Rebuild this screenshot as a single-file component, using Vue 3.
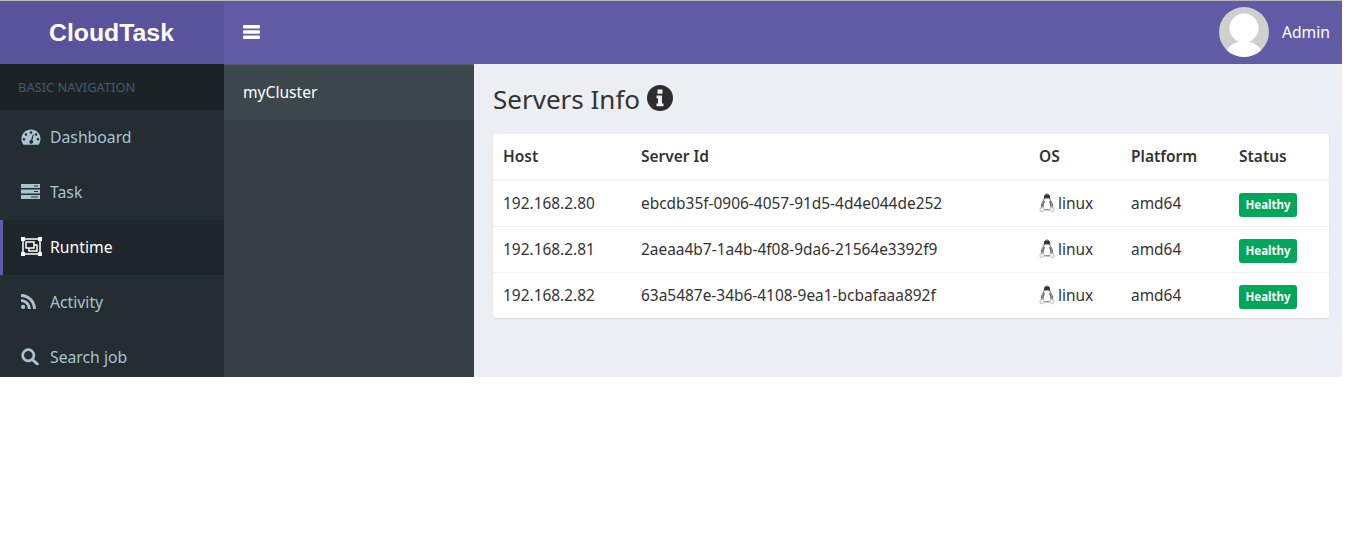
<template>
  <div class="page">
    <header class="topbar">
      <div class="brand">CloudTask</div>
      <div class="topbar-main">
        <button class="burger" aria-label="menu">
          <svg width="17" height="14" viewBox="0 0 17 14"><path d="M1 0h15a1 1 0 0 1 1 1v1.400a1 1 0 0 1-1 1H1a1 1 0 0 1-1-1V1a1 1 0 0 1 1-1zM1 5.300h15a1 1 0 0 1 1 1v1.400a1 1 0 0 1-1 1H1a1 1 0 0 1-1-1V6.300a1 1 0 0 1 1-1zM1 10.600h15a1 1 0 0 1 1 1V13a1 1 0 0 1-1 1H1a1 1 0 0 1-1-1v-1.400a1 1 0 0 1 1-1z" fill="#fff"/></svg>
        </button>
        <div class="user">
          <svg class="avatar" width="50" height="50" viewBox="0 0 50 50">
            <defs><clipPath id="av"><circle cx="25" cy="25" r="25"/></clipPath></defs>
            <circle cx="25" cy="25" r="25" fill="#cfcfcf"/>
            <g clip-path="url(#av)" fill="#fff">
              <circle cx="25" cy="21" r="14.500"/>
              <ellipse cx="25" cy="50" rx="19" ry="16"/>
            </g>
          </svg>
          <span>Admin</span>
        </div>
      </div>
    </header>
    <div class="body">
      <aside class="sidebar">
        <div class="nav-label">BASIC NAVIGATION</div>
        <a v-for="item in navItems" :key="item.label" class="nav-item" :class="{ active: item.active }">
          <span class="nav-icon">
            <svg v-if="item.icon === 'dash'" width="20" height="16" viewBox="0 0 20 16"><path fill-rule="evenodd" d="M10 0.5C4.6 0.5 0.5 4.6 0.5 10c0 2 .6 3.9 1.6 5.2l.4.5h15l.4-.5c1-1.3 1.6-3.2 1.6-5.2C19.500 4.600 15.400 .5 10 .5zM10 2.200a1.300 1.300 0 1 1 0 2.600 1.300 1.300 0 0 1 0-2.600zM5 4.200a1.300 1.300 0 1 1 0 2.600 1.300 1.300 0 0 1 0-2.600zM15 4.200a1.300 1.300 0 1 1 0 2.600 1.300 1.300 0 0 1 0-2.600zM3 9a1.300 1.300 0 1 1 0 2.600A1.300 1.300 0 0 1 3 9zM17 9a1.300 1.300 0 1 1 0 2.600A1.300 1.300 0 0 1 17 9zM11.800 5.500l.9.3-1.300 5.700c.6.5.9 1.100.8 1.800-.2 1-1.200 1.700-2.300 1.500-1-.2-1.700-1.200-1.500-2.300.1-.8.8-1.400 1.600-1.500z" fill="currentColor"/></svg>
            <svg v-else-if="item.icon === 'task'" width="19" height="15" viewBox="0 0 19 15"><path fill-rule="evenodd" d="M0 0h19v4H0zM13 1.500v1h4v-1zM0 5.500h19v4H0zM13 7v1h4V7zM0 11h19v4H0zM10 12.500v1h7v-1z" fill="currentColor"/></svg>
            <svg v-else-if="item.icon === 'runtime'" width="21" height="19" viewBox="0 0 21 19"><g fill="none" stroke="currentColor" stroke-width="1.500"><rect x="2" y="2" width="17" height="15"/><rect x="5" y="5" width="8" height="6"/><path d="M8 11v3h8V8h-3"/></g><g fill="currentColor"><rect x="0" y="0" width="4" height="4"/><rect x="17" y="0" width="4" height="4"/><rect x="0" y="15" width="4" height="4"/><rect x="17" y="15" width="4" height="4"/></g></svg>
            <svg v-else-if="item.icon === 'rss'" width="15" height="15" viewBox="0 0 15 15"><g fill="currentColor"><circle cx="2.100" cy="12.900" r="2.100"/><path d="M0 5.200v2.900c3.800 0 6.900 3.100 6.900 6.900h2.900C9.800 9.600 5.400 5.200 0 5.200z"/><path d="M0 0v2.900C6.700 2.900 12.100 8.300 12.100 15H15C15 6.700 8.300 0 0 0z"/></g></svg>
            <svg v-else width="18" height="17" viewBox="0 0 18 17"><circle cx="7.300" cy="7.300" r="5.600" fill="none" stroke="currentColor" stroke-width="2.700"/><path d="M11.300 11.500l5 4.500" stroke="currentColor" stroke-width="3" stroke-linecap="round"/></svg>
          </span>
          <span>{{ item.label }}</span>
        </a>
      </aside>
      <nav class="subpanel">
        <div class="cluster">myCluster</div>
      </nav>
      <main class="content">
        <h1 class="title">
          Servers Info
          <svg class="info" width="26" height="26" viewBox="0 0 26 26"><path fill-rule="evenodd" d="M13 0a13 13 0 1 1 0 26a13 13 0 0 1 0-26zM10.500 4.500v4.200h5V4.500zM9.500 10.500v2.800h1.500v5.200H9.500v2.800h7v-2.800H15v-8z" fill="#2d2d2d"/></svg>
        </h1>
        <div class="card">
          <table>
            <thead>
              <tr>
                <th class="c-host">Host</th>
                <th class="c-id">Server Id</th>
                <th class="c-os">OS</th>
                <th class="c-platform">Platform</th>
                <th>Status</th>
              </tr>
            </thead>
            <tbody>
              <tr v-for="s in servers" :key="s.host">
                <td>{{ s.host }}</td>
                <td>{{ s.id }}</td>
                <td>
                  <span class="os">
                    <svg width="16" height="20" viewBox="0 0 16 20">
                      <path d="M8 1C6 1 5.400 2.600 5.400 4.500c0 1.500-.5 2.300-1.400 3.700C3 9.800 2.200 11.500 2.400 13.500c.1 1.300 1 2.700 2.300 3.300h6.600c1.300-.6 2.200-2 2.300-3.300.2-2-.6-3.700-1.600-5.300-.9-1.400-1.400-2.200-1.400-3.700C10.600 2.600 10 1 8 1z" fill="#fff" stroke="#3a3a3a" stroke-width=".8"/>
                      <path d="M6 2c-.8.600-.9 2.200-.7 3.500h5.400C10.900 4.200 10.800 2.600 10 2 9 1.300 7 1.300 6 2z" fill="#333"/>
                      <path d="M4.800 8C3.600 9.800 3 11.500 3.200 13.200l1.500 1.300C4.500 12 5 10 6.200 8.200zM11.200 8c1.200 1.800 1.800 3.500 1.600 5.200l-1.500 1.300c.2-2.500-.3-4.500-1.500-6.300z" fill="#666"/>
                      <path d="M6.500 5.300h3L8 6.800z" fill="#c9c49a"/>
                      <path d="M1 15.500l3-1.500 1.500 3-2 1.800-2.500-1zM15 15.500l-3-1.500-1.500 3 2 1.800 2.500-1z" fill="#f4f4ee" stroke="#9a9a9a" stroke-width=".6"/>
                    </svg>
                    linux
                  </span>
                </td>
                <td>{{ s.platform }}</td>
                <td><span class="badge">Healthy</span></td>
              </tr>
            </tbody>
          </table>
        </div>
      </main>
    </div>
  </div>
</template>

<script setup>
const navItems = [
  { label: 'Dashboard', icon: 'dash' },
  { label: 'Task', icon: 'task' },
  { label: 'Runtime', icon: 'runtime', active: true },
  { label: 'Activity', icon: 'rss' },
  { label: 'Search job', icon: 'search' }
]

const servers = [
  { host: '192.168.2.80', id: 'ebcdb35f-0906-4057-91d5-4d4e044de252', platform: 'amd64' },
  { host: '192.168.2.81', id: '2aeaa4b7-1a4b-4f08-9da6-21564e3392f9', platform: 'amd64' },
  { host: '192.168.2.82', id: '63a5487e-34b6-4108-9ea1-bcbafaaa892f', platform: 'amd64' }
]
</script>

<style>
body {
  background: #fff;
}
</style>

<style scoped>
.page {
  width: 1342px;
  height: 377px;
  overflow: hidden;
  display: flex;
  flex-direction: column;
  font-family: "Noto Sans", sans-serif;
  font-size: 15px;
  color: #333;
}

.topbar {
  height: 64px;
  flex: none;
  display: flex;
  border-top: 1px solid #b5b5b5;
  box-sizing: border-box;
}

.brand {
  width: 224px;
  flex: none;
  box-sizing: border-box;
  padding-right: 1px;
  background: #58539a;
  color: #fff;
  font-family: "Liberation Sans", sans-serif;
  font-size: 24.800px;
  font-weight: 700;
  text-align: center;
  line-height: 63px;
}

.topbar-main {
  flex: 1;
  display: flex;
  align-items: center;
  justify-content: space-between;
  background: #615ba6;
  padding: 0 12px 1px 19px;
}

.burger {
  background: none;
  border: 0;
  padding: 0;
  display: flex;
}

.user {
  display: flex;
  align-items: center;
  gap: 13px;
  color: #fff;
  font-size: 15.700px;
}

.body {
  flex: 1;
  display: flex;
  min-height: 0;
}

.sidebar {
  width: 224px;
  flex: none;
  background: #232d32;
  color: #a9c4d3;
}

.nav-label {
  height: 46px;
  line-height: 46px;
  padding-left: 18px;
  background: #1c2326;
  color: #465a66;
  font-size: 12.900px;
}

.nav-item {
  height: 55px;
  display: flex;
  align-items: center;
  box-sizing: border-box;
  padding: 0 0 2px 21px;
  font-size: 15.750px;
}

.nav-item.active {
  background: #1f262c;
  border-left: 3px solid #625ca8;
  padding-left: 18px;
  color: #fff;
}

.nav-icon {
  width: 29px;
  flex: none;
  display: flex;
  align-items: center;
}

.subpanel {
  width: 250px;
  flex: none;
  background: #363f44;
}

.cluster {
  height: 56px;
  line-height: 55px;
  padding-left: 19px;
  background: #3b474b;
  border-top: 1px solid #5a5c6a;
  box-sizing: border-box;
  color: #fff;
  font-size: 15.600px;
}

.content {
  flex: 1;
  background: #ebeef3;
  padding: 0 13px 0 19px;
  min-width: 0;
}

.title {
  margin: 0;
  height: 70px;
  display: flex;
  align-items: center;
  gap: 7px;
  padding-bottom: 1px;
  box-sizing: border-box;
  font-size: 26px;
  font-weight: 400;
  color: #333;
}

.info {
  margin-bottom: 1px;
}

.card {
  background: #fff;
  border-radius: 4px;
  box-shadow: 0 1px 2px rgba(0, 0, 0, 0.08);
}

table {
  width: 100%;
  border-collapse: collapse;
  table-layout: fixed;
}

th {
  height: 46px;
  padding: 0 10px 2px;
  box-sizing: border-box;
  text-align: left;
  font-size: 15.500px;
  font-weight: 600;
  border-bottom: 2px solid #f0f2f4;
}

td {
  height: 46px;
  padding: 0 10px;
  box-sizing: border-box;
  font-size: 15.450px;
  border-bottom: 1px solid #f0f2f4;
}

tbody tr:last-child td {
  border-bottom: 0;
}

.c-host {
  width: 138px;
}

.c-id {
  width: 398px;
}

.c-os {
  width: 92px;
}

.c-platform {
  width: 108px;
}

.os {
  display: flex;
  align-items: center;
  gap: 3px;
}

.badge {
  display: flex;
  width: fit-content;
  margin-top: 3px;
  background: #00a65a;
  color: #fff;
  font-size: 11.500px;
  font-weight: 700;
  line-height: 16px;
  padding: 4px 6.500px;
  border-radius: 3px;
}
</style>
